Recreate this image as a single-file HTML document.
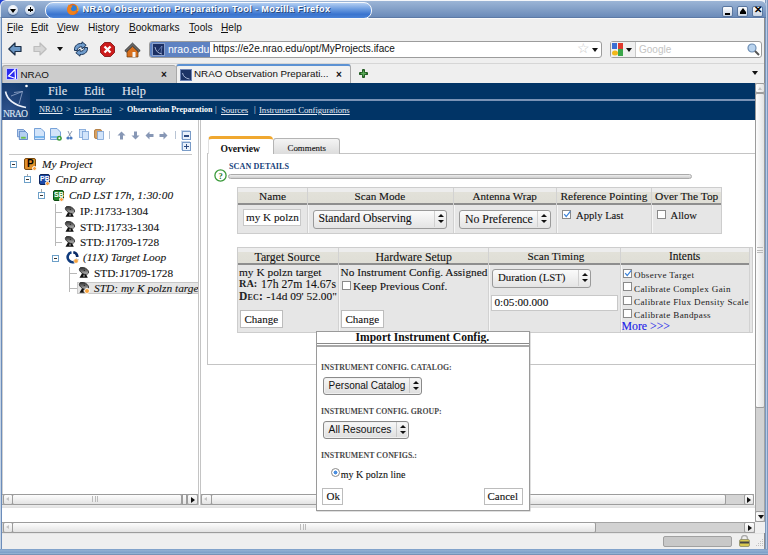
<!DOCTYPE html>
<html><head><meta charset="utf-8">
<style>
*{box-sizing:border-box;margin:0;padding:0}
html,body{width:768px;height:555px;overflow:hidden;background:#86a6cc;font-family:"Liberation Sans",sans-serif;}
.a{position:absolute}
.s{font-family:"Liberation Serif",serif;-webkit-text-stroke:0.1px currentColor}
.t{position:absolute;white-space:nowrap}
.s[style*="bold"]{-webkit-text-stroke:0}
#title{position:absolute;left:0;top:0;width:766px;height:18px;background:linear-gradient(#9cb5d6,#6b8bb9);border-radius:6px 6px 0 0;border-top:1px solid #f4f6fa;border-left:1px solid #dfe8f2;border-bottom:1px solid #5d7aa6}
#cap{position:absolute;left:44px;top:1px;width:327px;height:17px;border-radius:8px;background:linear-gradient(#b4cff2,#6d9de0 40%,#3a74cf 75%,#4a82d6);border:1px solid #f4f8fd}
.ttl{position:absolute;left:81.5px;top:2.5px;font:bold 9.2px "Liberation Sans",sans-serif;letter-spacing:0.35px;color:#fff;text-shadow:1px 1px 0 #2c4a78;white-space:nowrap}
.wbtn{position:absolute;top:3.5px;width:10px;height:10px;border-radius:50%;background:radial-gradient(circle at 50% 30%,#ffffff,#dce5f1 55%,#8ea6c8);box-shadow:0 1px 1px #3e5e8e}
.sq{position:absolute;top:5px;width:11px;height:11px;background:linear-gradient(#fff,#c8d3e2);border:1px solid #5a77a0;border-radius:2px}
#chrome{position:absolute;left:2px;top:18px;width:762px;height:531px;background:#efefef;border-top:1px solid #fafafa}
.menu{position:absolute;top:22px;font-size:10.1px;color:#111;white-space:nowrap}
</style></head><body>
<div class="a" style="left:0;top:0;width:8px;height:8px;background:#1f3fd4"></div>
<div class="a" style="left:760px;top:0;width:8px;height:8px;background:#e9eef6"></div>
<div class="a" style="left:0;top:18px;width:1px;height:537px;background:#c3d3e6"></div>
<div class="a" style="left:1px;top:18px;width:1px;height:531px;background:#6b8cba"></div>
<div class="a" style="left:764px;top:18px;width:1px;height:531px;background:#8c8c8c"></div>
<div class="a" style="left:765px;top:0;width:3px;height:555px;background:linear-gradient(90deg,#6080aa,#b8cbe6,#6080aa)"></div>
<div class="a" style="left:0;top:549px;width:768px;height:6px;background:linear-gradient(#7c9ec8,#93b1d2 30%,#7c9ec8 55%,#93b1d2 75%,#6a84a8)"></div>
<div id="title">
  <div class="wbtn" style="left:6.5px"></div>
  <div class="a" style="left:8.5px;top:7.5px;width:0;height:0;border-left:3px solid transparent;border-right:3px solid transparent;border-top:4px solid #000"></div>
  <div class="wbtn" style="left:24.3px"></div>
  <div class="a" style="left:26.8px;top:8px;width:5px;height:1.5px;background:#000"></div>
  <div class="a" style="left:28.55px;top:6.25px;width:1.5px;height:5px;background:#000"></div>
  <div id="cap"></div>
  <svg class="a" style="left:65px;top:2px" width="13" height="13" viewBox="0 0 13 13"><circle cx="6.8" cy="6.4" r="5.6" fill="#e86a14"/><circle cx="7.4" cy="5.6" r="3.3" fill="#2f7fd6"/><path d="M1.8 3.5 L3 1.2 L4.2 2.8 C5.5 2.2 6.5 2.8 6.2 4 C5 4.5 4.5 5.8 5.2 7 C6.5 8.8 9 8.6 10.6 6.5 C10.6 9.5 8.6 11.8 6 11.8 C3 11.8 1.2 9.2 1.2 6.4 Z" fill="#f0801c"/><path d="M10.5 2.5 C12 4 12.4 6 11.8 8" stroke="#f8c030" stroke-width="1" fill="none"/></svg>
  <div class="ttl">NRAO Observation Preparation Tool - Mozilla Firefox</div>
  <div class="sq" style="left:721px"></div>
  <div class="a" style="left:724px;top:12px;width:5px;height:1.5px;background:#000"></div>
  <div class="sq" style="left:736px"></div>
  <div class="a" style="left:738.5px;top:6.5px;width:0;height:0;border-left:3px solid transparent;border-right:3px solid transparent;border-bottom:4px solid #000"></div>
  <div class="a" style="left:738.5px;top:11px;width:6px;height:1.5px;background:#000"></div>
  <div class="sq" style="left:751px"></div>
  <div class="t" style="left:752.5px;top:3px;font:bold 10px 'Liberation Sans';color:#000">✕</div>
</div>
<div id="chrome"></div>
<div class="menu" style="left:7px">File</div>
<div class="menu" style="left:31px">Edit</div>
<div class="menu" style="left:57px">View</div>
<div class="menu" style="left:88px">History</div>
<div class="menu" style="left:129px">Bookmarks</div>
<div class="menu" style="left:189px">Tools</div>
<div class="menu" style="left:221px">Help</div>
<div class="a" style="left:7px;top:32px;width:6px;height:1px;background:#111"></div>
<div class="a" style="left:31px;top:32px;width:7px;height:1px;background:#111"></div>
<div class="a" style="left:57px;top:32px;width:7px;height:1px;background:#111"></div>
<div class="a" style="left:98px;top:32px;width:5px;height:1px;background:#111"></div>
<div class="a" style="left:129px;top:32px;width:7px;height:1px;background:#111"></div>
<div class="a" style="left:189px;top:32px;width:6px;height:1px;background:#111"></div>
<div class="a" style="left:221px;top:32px;width:7px;height:1px;background:#111"></div>
<!-- nav toolbar -->
<svg class="a" style="left:8px;top:42px" width="14" height="14" viewBox="0 0 14 14"><path d="M0.8 7 L7 1 L7 4.5 L13 4.5 L13 9.5 L7 9.5 L7 13 Z" fill="#6a96c4" stroke="#1b2f48" stroke-width="1.2" stroke-linejoin="round"/></svg>
<svg class="a" style="left:33px;top:42px" width="14" height="14" viewBox="0 0 14 14"><path d="M13.2 7 L7 1 L7 4.5 L1 4.5 L1 9.5 L7 9.5 L7 13 Z" fill="#d6d6d6" stroke="#bdbdbd" stroke-width="1.2" stroke-linejoin="round"/></svg>
<div class="a" style="left:57px;top:47px;width:0;height:0;border-left:3.5px solid transparent;border-right:3.5px solid transparent;border-top:4px solid #111"></div>
<svg class="a" style="left:72px;top:41px" width="18" height="16" viewBox="0 0 18 16"><path d="M2.5 9.5 C2 4.5 6 2 10 2.5 L10 0.8 L14.2 4.3 L10 7.8 L10 5.8 C7.5 5.5 5.3 7 5.6 9.5 Z" fill="#6f9ccc" stroke="#1b3558" stroke-width="1" stroke-linejoin="round"/><path d="M15.5 6.5 C16 11.5 12 14 8 13.5 L8 15.2 L3.8 11.7 L8 8.2 L8 10.2 C10.5 10.5 12.7 9 12.4 6.5 Z" fill="#6f9ccc" stroke="#1b3558" stroke-width="1" stroke-linejoin="round"/></svg>
<svg class="a" style="left:100px;top:42px" width="15" height="15" viewBox="0 0 15 15"><path d="M4.5 0.5 L10.5 0.5 L14.5 4.5 L14.5 10.5 L10.5 14.5 L4.5 14.5 L0.5 10.5 L0.5 4.5 Z" fill="#cc1b1b" stroke="#7a0a0a" stroke-width="0.8"/><path d="M4.5 4.5 L10.5 10.5 M10.5 4.5 L4.5 10.5" stroke="#fff" stroke-width="2.3"/></svg>
<svg class="a" style="left:124px;top:42px" width="17" height="16" viewBox="0 0 17 16"><path d="M3 8 L8.5 3.5 L14 8 L14 15 L3 15 Z" fill="#d8701e" stroke="#6a3a10" stroke-width="0.7"/><path d="M0.8 8.6 L8.5 1 L16.2 8.6 L14.6 10 L8.5 4.2 L2.4 10 Z" fill="#6a6a6a" stroke="#2a2a2a" stroke-width="0.8" stroke-linejoin="round"/><rect x="8.5" y="10" width="3" height="5" fill="#f4f4f4"/></svg>
<!-- URL bar -->
<div class="a" style="left:149px;top:41px;width:453px;height:17px;background:#fff;border:1px solid #9c9c9c;border-radius:3px"></div>
<div class="a" style="left:150px;top:42px;width:60px;height:15px;background:#5e82c2;border-radius:2px 0 0 2px"></div>
<div class="a" style="left:152px;top:43px;width:13px;height:13px;background:#1b2f63;border:1px solid #8aa0cc"></div>
<svg class="a" style="left:153px;top:44px" width="11" height="11" viewBox="0 0 11 11"><path d="M2 3 Q3 9 9 10" stroke="#c8d4f0" stroke-width="0.8" fill="none"/><path d="M5 7 L9 2 L8 9" stroke="#8ea4d8" stroke-width="0.6" fill="none"/></svg>
<div class="t" style="left:168px;top:43px;font-size:10.5px;color:#fff">nrao.edu</div>
<div class="t" style="left:213px;top:43px;font-size:10px;color:#111">https://e2e.nrao.edu/opt/MyProjects.iface</div>
<div class="t" style="left:577px;top:40px;font-size:14px;color:#c8c8c8">☆</div>
<div class="a" style="left:592px;top:48px;width:0;height:0;border-left:3.5px solid transparent;border-right:3.5px solid transparent;border-top:4px solid #111"></div>
<!-- search bar -->
<div class="a" style="left:610px;top:41px;width:152px;height:17px;background:#fff;border:1px solid #9c9c9c;border-radius:3px"></div>
<div class="a" style="left:611px;top:42px;width:25px;height:15px;background:#f0f0f0;border-right:1px solid #c8c8c8"></div>
<svg class="a" style="left:612px;top:43px" width="12" height="13" viewBox="0 0 12 13"><rect x="0" y="0" width="5" height="6" fill="#3b6fd4"/><rect x="6" y="0" width="5" height="6" fill="#e03a2e"/><rect x="6" y="6" width="5" height="7" fill="#3aa64a"/><ellipse cx="3" cy="10" rx="3" ry="2.5" fill="#f2b818"/></svg>
<div class="a" style="left:626px;top:48px;width:0;height:0;border-left:3.5px solid transparent;border-right:3.5px solid transparent;border-top:4px solid #111"></div>
<div class="t" style="left:639px;top:44px;font-size:10px;color:#c4c4c4">Google</div>
<svg class="a" style="left:747px;top:43px" width="13" height="13" viewBox="0 0 13 13"><circle cx="5" cy="5" r="4" fill="#b9d3ee" stroke="#6e8fb5" stroke-width="1.2"/><path d="M8 8 L12 12" stroke="#555" stroke-width="2"/></svg>
<!-- tab bar -->
<div class="a" style="left:2px;top:63px;width:762px;height:1px;background:#d6d6d6"></div>
<div class="a" style="left:2px;top:65px;width:174px;height:18px;background:#cccccc;border-top:1px solid #a8a8a8;border-left:1px solid #a8a8a8;border-radius:3px 3px 0 0"></div>
<div class="a" style="left:6px;top:68px;width:12px;height:12px;background:#2a2af0;border:1px solid #c8c8ff"></div>
<svg class="a" style="left:6px;top:68px" width="12" height="12" viewBox="0 0 12 12"><path d="M9 1.5 L2.5 8 L9.5 10.5 Z M9 1.5 L9.5 10.5" stroke="#fff" stroke-width="1.2" fill="none"/></svg>
<div class="t" style="left:20.5px;top:68.5px;font-size:9.8px;color:#111">NRAO</div>
<div class="t" style="left:161px;top:69px;font:bold 10px 'Liberation Sans';color:#111">×</div>
<div class="a" style="left:176px;top:64px;width:175px;height:19px;background:#f1f1f1;border-top:2px solid #5d92d3;border-left:1px solid #a8a8a8;border-right:1px solid #a8a8a8;border-radius:3px 3px 0 0"></div>
<div class="a" style="left:180px;top:69px;width:12px;height:12px;background:#1c3366;border:1px solid #6c83b5"></div>
<svg class="a" style="left:181px;top:70px" width="10" height="10" viewBox="0 0 10 10"><path d="M1.5 3 Q2.5 8 8.5 9" stroke="#c8d4f0" stroke-width="0.8" fill="none"/></svg>
<div class="t" style="left:194px;top:68px;font-size:9.8px;color:#111">NRAO Observation Preparati...</div>
<div class="t" style="left:336px;top:69px;font:bold 10px 'Liberation Sans';color:#111">×</div>
<svg class="a" style="left:358.5px;top:68.5px" width="9" height="9" viewBox="0 0 9 9"><path d="M4.5 1.3 V7.7 M1.3 4.5 H7.7" stroke="#1f5a1f" stroke-width="3" stroke-linecap="round"/><path d="M4.5 2.3 V6.7 M2.3 4.5 H6.7" stroke="#5aa858" stroke-width="1.4" stroke-linecap="round"/></svg>
<div class="a" style="left:752px;top:71px;width:0;height:0;border-left:3.5px solid transparent;border-right:3.5px solid transparent;border-top:4px solid #111"></div>
<!-- page viewport -->
<div class="a" style="left:2px;top:83px;width:753px;height:439px;background:#fff"></div>
<!-- header -->
<div class="a" style="left:2px;top:83px;width:753px;height:37px;background:#013466"></div>
<div class="a" style="left:2px;top:83px;width:28px;height:37px;background:radial-gradient(ellipse at 20% 80%,#30548e 0,#1e4278 45%,#0a3566 100%)"></div>
<svg class="a" style="left:2px;top:83px" width="28" height="37" viewBox="0 0 28 37"><circle cx="24.5" cy="3" r="1.3" fill="#fff"/><path d="M3.5 8.5 Q6 21 24 24.5" stroke="#eef2fa" stroke-width="1.6" fill="none"/><path d="M9 13 L20.5 8.5 L17 21 M12 9.5 L20.5 8.5" stroke="#a8b8d8" stroke-width="0.7" fill="none"/></svg>
<div class="t s" style="left:2.5px;top:108px;font-size:10.5px;color:#dfe6f2;letter-spacing:-0.9px;transform:scaleX(0.92);transform-origin:left">NRAO</div>
<div class="t s" style="left:48px;top:84px;font-size:12.3px;color:#e1e7f0">File</div>
<div class="t s" style="left:84px;top:84px;font-size:12.3px;color:#e1e7f0">Edit</div>
<div class="t s" style="left:122px;top:84px;font-size:12.3px;color:#e1e7f0">Help</div>
<div class="a" style="left:36px;top:99px;width:719px;height:2px;background:#7a93b6"></div>
<div class="t s" style="left:39px;top:105px;font-size:8.3px;color:#e6ebf3;-webkit-text-stroke:0"><u>NRAO</u></div>
<div class="t s" style="left:66px;top:105px;font-size:8.3px;color:#e6ebf3;-webkit-text-stroke:0">&gt;</div>
<div class="t s" style="left:74px;top:105px;font-size:8.8px;color:#e6ebf3;-webkit-text-stroke:0;letter-spacing:-0.2px"><u>User Portal</u></div>
<div class="t s" style="left:119px;top:105px;font-size:8.3px;color:#e6ebf3;-webkit-text-stroke:0">&gt;</div>
<div class="t s" style="left:127px;top:105px;font-size:8px;color:#fff;font-weight:bold;-webkit-text-stroke:0">Observation Preparation</div>
<div class="t s" style="left:215px;top:105px;font-size:8.3px;color:#e6ebf3;-webkit-text-stroke:0">|</div>
<div class="t s" style="left:221px;top:105px;font-size:8.8px;color:#e6ebf3;-webkit-text-stroke:0;letter-spacing:-0.1px"><u>Sources</u></div>
<div class="t s" style="left:254px;top:105px;font-size:8.3px;color:#e6ebf3;-webkit-text-stroke:0">|</div>
<div class="t s" style="left:259px;top:105px;font-size:8.7px;color:#e6ebf3;-webkit-text-stroke:0;letter-spacing:-0.05px"><u>Instrument Configurations</u></div>
<!-- left panel -->
<div class="a" style="left:2px;top:120px;width:1px;height:374px;background:#d0d0d0"></div>
<!-- left panel toolbar -->
<svg class="a" style="left:17px;top:128.5px" width="11" height="11" viewBox="0 0 12 12"><path d="M0.5 0.5 H7 L9 2.5 V8.5 H0.5 Z" fill="#c9dcf6" stroke="#5b86c6" stroke-width="0.9"/><path d="M2.5 2.5 H9 L11.5 5 V11.5 H2.5 Z" fill="#b5d0f2" stroke="#4a78bc" stroke-width="0.9"/><rect x="4.5" y="8.5" width="5" height="2" fill="#6cc04a"/></svg>
<svg class="a" style="left:33.5px;top:128px" width="11" height="12" viewBox="0 0 11 12"><path d="M0.5 0.5 H7 L10.5 4 V11.5 H0.5 Z" fill="#d2e4fa" stroke="#6a98d4" stroke-width="0.9"/><rect x="1" y="8" width="9" height="2" fill="#7ab8ee"/></svg>
<svg class="a" style="left:50px;top:128px" width="12" height="13" viewBox="0 0 12 13"><path d="M0.5 0.5 H7 L10.5 4 V11.5 H0.5 Z" fill="#d2e4fa" stroke="#6a98d4" stroke-width="0.9"/><rect x="1" y="8" width="9" height="2" fill="#7ab8ee"/><circle cx="9.3" cy="10.3" r="2.5" fill="#3c9c3c"/><circle cx="9.3" cy="10.3" r="1" fill="#fff"/></svg>
<svg class="a" style="left:66px;top:130.5px" width="7" height="9" viewBox="0 0 7 9"><path d="M2 0 L4.5 5.5 M6 0 L2.5 5.5" stroke="#8090a8" stroke-width="0.9"/><circle cx="2" cy="7" r="1.6" fill="#4a7ac0"/><circle cx="5" cy="7" r="1.6" fill="#4a7ac0"/></svg>
<svg class="a" style="left:79px;top:129px" width="10" height="11" viewBox="0 0 10 11"><rect x="0.5" y="0.5" width="6" height="8" fill="#d2e4fa" stroke="#7aa2d6" stroke-width="0.8"/><rect x="3.5" y="2.5" width="6" height="8" fill="#d2e4fa" stroke="#7aa2d6" stroke-width="0.8"/></svg>
<svg class="a" style="left:93.5px;top:129px" width="10" height="11" viewBox="0 0 10 11"><rect x="0.5" y="0.5" width="7" height="9" rx="1.5" fill="#d8a060" stroke="#a87030" stroke-width="0.8"/><rect x="3.5" y="2.5" width="6" height="8" fill="#d2e4fa" stroke="#7aa2d6" stroke-width="0.8"/></svg>
<div class="a" style="left:109px;top:131px;width:1px;height:8px;background:#b8c4d4"></div>
<svg class="a" style="left:117px;top:131px" width="9" height="9" viewBox="0 0 9 9"><path d="M4.5 0.5 L8.5 4.5 H6 V8.5 H3 V4.5 H0.5 Z" fill="#8797b5"/></svg>
<svg class="a" style="left:131px;top:131px" width="9" height="9" viewBox="0 0 9 9"><path d="M4.5 8.5 L8.5 4.5 H6 V0.5 H3 V4.5 H0.5 Z" fill="#8797b5"/></svg>
<svg class="a" style="left:145px;top:131px" width="9" height="9" viewBox="0 0 9 9"><path d="M0.5 4.5 L4.5 0.5 V3 H8.5 V6 H4.5 V8.5 Z" fill="#8797b5"/></svg>
<svg class="a" style="left:159px;top:131px" width="9" height="9" viewBox="0 0 9 9"><path d="M8.5 4.5 L4.5 0.5 V3 H0.5 V6 H4.5 V8.5 Z" fill="#8797b5"/></svg>
<div class="a" style="left:175px;top:131px;width:1px;height:8px;background:#b8c4d4"></div>
<div class="a" style="left:182px;top:131px;width:9px;height:9px;background:#e8f0fa;border:1px solid #7a9cc8;box-shadow:-1px -1px 0 #c8d8ee"></div>
<div class="a" style="left:184px;top:135px;width:5px;height:1.5px;background:#2c4a80"></div>
<div class="a" style="left:182px;top:142px;width:9px;height:9px;background:#e8f0fa;border:1px solid #7a9cc8;box-shadow:-1px -1px 0 #c8d8ee"></div>
<div class="a" style="left:184px;top:146px;width:5px;height:1px;background:#2c4a80"></div>
<div class="a" style="left:186px;top:144px;width:1px;height:5px;background:#2c4a80"></div>
<div class="a" style="left:9px;top:154px;width:183px;height:1px;background:#c8c8c8"></div>
<!-- tree -->
<div class="a" style="left:10px;top:161px;width:7px;height:7px;background:#fff;border:1px solid #6da0c8"></div><div class="a" style="left:12px;top:164px;width:3px;height:1px;background:#333"></div>
<div class="a" style="left:24px;top:158px;width:12px;height:12px;background:#e0902a;border:1px solid #7a4a10;border-radius:2px"></div>
<div class="t" style="left:27px;top:158px;font:bold 10px 'Liberation Sans';color:#000">P</div>
<div class="a" style="left:32px;top:166px;width:5px;height:5px;background:#f8a040;border:1px solid #fff;border-radius:50%"></div>
<div class="t s" style="left:42px;top:158px;font-size:11.4px;font-style:italic;color:#111">My Project</div>

<div class="a" style="left:27px;top:174px;width:1px;height:2px;background:#aaa"></div>
<div class="a" style="left:24px;top:176px;width:7px;height:7px;background:#fff;border:1px solid #6da0c8"></div><div class="a" style="left:26px;top:179px;width:3px;height:1px;background:#333"></div>
<div class="a" style="left:39px;top:174px;width:11px;height:11px;background:#1d4aa8;border:1px solid #0c2458;border-radius:2px"></div>
<div class="t" style="left:40px;top:175px;font:bold 7px 'Liberation Sans';color:#fff">PB</div>
<div class="a" style="left:45px;top:181px;width:5px;height:5px;background:#f8a040;border:1px solid #fff;border-radius:50%"></div>
<div class="t s" style="left:55.5px;top:173px;font-size:11.4px;font-style:italic;color:#111">CnD array</div>

<div class="a" style="left:41px;top:189px;width:1px;height:3px;background:#aaa"></div>
<div class="a" style="left:38px;top:192px;width:7px;height:7px;background:#fff;border:1px solid #6da0c8"></div><div class="a" style="left:40px;top:195px;width:3px;height:1px;background:#333"></div>
<div class="a" style="left:53px;top:190px;width:11px;height:11px;background:#21862a;border:1px solid #0c4a10;border-radius:2px"></div>
<div class="t" style="left:54px;top:191px;font:bold 7px 'Liberation Sans';color:#fff">SB</div>
<div class="a" style="left:59px;top:197px;width:5px;height:5px;background:#f8a040;border:1px solid #fff;border-radius:50%"></div>
<div class="t s" style="left:69px;top:188.5px;font-size:11.4px;font-style:italic;color:#111">CnD LST 17h, 1:30:00</div>

<div class="a" style="left:55px;top:204px;width:1px;height:42px;background:#b8b8b8"></div>
<div class="a" style="left:56px;top:212px;width:6px;height:1px;background:#b8b8b8"></div>
<div class="a" style="left:56px;top:227px;width:6px;height:1px;background:#b8b8b8"></div>
<div class="a" style="left:56px;top:242px;width:6px;height:1px;background:#b8b8b8"></div>
<svg width="0" height="0" style="position:absolute"><defs>
<linearGradient id="dg" x1="0" y1="0" x2="1" y2="1"><stop offset="0" stop-color="#111"/><stop offset="0.55" stop-color="#777"/><stop offset="1" stop-color="#eee"/></linearGradient>
<symbol id="ant" viewBox="0 0 12 12"><path d="M1.5 10.8 L4.2 6 L6 6.5 L7.5 6 L9.8 10.8 Z" fill="#111"/><path d="M5.3 9.5 L6 7.2 L6.7 9.5 Z" fill="#fff"/><ellipse cx="6" cy="3.8" rx="5" ry="3" transform="rotate(28 6 3.8)" fill="url(#dg)" stroke="#222" stroke-width="0.7"/><circle cx="6.3" cy="3.4" r="0.6" fill="#222"/></symbol>
</defs></svg>
<svg class="a" style="left:64px;top:206px" width="12" height="12"><use href="#ant"/></svg>
<div class="t s" style="left:80px;top:205px;font-size:11.3px;color:#111;word-spacing:-1.2px">IP: J1733-1304</div>
<svg class="a" style="left:64px;top:221px" width="12" height="12"><use href="#ant"/></svg>
<div class="t s" style="left:80px;top:220.5px;font-size:11.3px;color:#111;word-spacing:-1.5px">STD: J1733-1304</div>
<svg class="a" style="left:64px;top:236px" width="12" height="12"><use href="#ant"/></svg>
<div class="t s" style="left:80px;top:235.5px;font-size:11.3px;color:#111;word-spacing:-1.5px">STD: J1709-1728</div>

<div class="a" style="left:52px;top:255px;width:7px;height:7px;background:#fff;border:1px solid #6da0c8"></div><div class="a" style="left:54px;top:258px;width:3px;height:1px;background:#333"></div>
<svg class="a" style="left:66px;top:251px" width="13" height="13" viewBox="0 0 13 13"><path d="M5.5 1.3 A5 5 0 1 0 11.3 8" stroke="#0f3a7c" stroke-width="2.6" fill="none"/><path d="M7.3 1.2 A5 5 0 0 1 11.3 6" stroke="#0a2a66" stroke-width="2.6" fill="none"/><circle cx="10" cy="10" r="2.3" fill="#f6a23c" stroke="#fff" stroke-width="0.6"/></svg>
<div class="t s" style="left:83px;top:251px;font-size:11.4px;font-style:italic;color:#111">(11X) Target Loop</div>

<div class="a" style="left:69px;top:267px;width:1px;height:25px;background:#b8b8b8"></div>
<div class="a" style="left:70px;top:273px;width:7px;height:1px;background:#b8b8b8"></div>
<div class="a" style="left:70px;top:288px;width:7px;height:1px;background:#b8b8b8"></div>
<svg class="a" style="left:78px;top:267px" width="12" height="12"><use href="#ant"/></svg>
<div class="t s" style="left:94px;top:266.5px;font-size:11.3px;color:#111;word-spacing:-1.5px">STD: J1709-1728</div>
<div class="a" style="left:77px;top:282px;width:121px;height:12px;background:#e6e6e6;border-top:1px solid #c8c8c8;border-bottom:1px solid #c8c8c8;border-left:1px solid #c8c8c8"></div>
<svg class="a" style="left:78px;top:282px" width="12" height="12"><use href="#ant"/></svg>
<div class="a" style="left:84px;top:288px;width:6px;height:6px;background:#f6a23c;border:1px solid #fff;border-radius:50%"></div>
<div style="position:absolute;left:77px;top:281px;width:121px;height:14px;overflow:hidden"><div class="t s" style="left:17px;top:0.5px;font-size:11.4px;font-style:italic;color:#111">STD: my K polzn target</div></div>
<!-- splitter -->
<div class="a" style="left:198px;top:120px;width:1px;height:388px;background:#c4c4c4"></div>
<div class="a" style="left:200px;top:120px;width:1px;height:388px;background:#c4c4c4"></div>
<!-- right panel tabs -->
<div class="a" style="left:207px;top:153px;width:548px;height:212px;border-left:1px solid #c4c4c4;border-bottom:1px solid #c4c4c4"></div>
<div class="a" style="left:339px;top:153px;width:416px;height:1px;background:#c4c4c4"></div>
<div class="a" style="left:208px;top:136px;width:65px;height:18px;background:#fff;border-top:3px solid #f0a830;border-radius:4px 4px 0 0;border-left:1px solid #e0e0e0"></div>
<div class="t s" style="left:220.5px;top:142.5px;font-size:9.6px;font-weight:bold;color:#111">Overview</div>
<div class="a" style="left:273px;top:138px;width:67px;height:16px;background:linear-gradient(#f4f4f4,#dcdcdc);border:1px solid #b4b4b4;border-bottom:none;border-radius:3px 3px 0 0"></div>
<div class="t s" style="left:287.5px;top:142.5px;font-size:8.9px;color:#111">Comments</div>
<div class="t s" style="left:229px;top:161.5px;font-size:8.1px;font-weight:bold;color:#15417a;font-variant:small-caps;letter-spacing:0.1px">SCAN DETAILS</div>
<svg class="a" style="left:214px;top:169px" width="13" height="13" viewBox="0 0 13 13"><circle cx="6.5" cy="6.5" r="5.6" fill="#fff" stroke="#3a9a3a" stroke-width="1.3"/><text x="6.5" y="9.6" text-anchor="middle" font-family="Liberation Serif" font-weight="bold" font-size="8.5" fill="#2a7a2a">?</text></svg>
<div class="a" style="left:228px;top:174px;width:464px;height:5px;background:linear-gradient(#eee,#ccc);border:1px solid #aaa;border-radius:3px"></div>
<!-- table 1 -->
<div class="a" style="left:237px;top:187px;width:485px;height:47px;background:#e6e6e6;border:1px solid #cdcdcd"></div>
<div class="a" style="left:238px;top:188px;width:483px;height:17px;background:linear-gradient(#ededed 0,#ededed 28%,#e2e1d9 30%,#dfded6 100%);border-bottom:2px solid #8e8e8e"></div>
<div class="a" style="left:307px;top:188px;width:1px;height:45px;background:#d2d2d2"></div><div class="a" style="left:308px;top:205px;width:1px;height:28px;background:#f6f6f6"></div>
<div class="a" style="left:453px;top:188px;width:1px;height:45px;background:#d2d2d2"></div><div class="a" style="left:454px;top:205px;width:1px;height:28px;background:#f6f6f6"></div>
<div class="a" style="left:556px;top:188px;width:1px;height:45px;background:#d2d2d2"></div><div class="a" style="left:557px;top:205px;width:1px;height:28px;background:#f6f6f6"></div>
<div class="a" style="left:651px;top:188px;width:1px;height:45px;background:#d2d2d2"></div><div class="a" style="left:652px;top:205px;width:1px;height:28px;background:#f6f6f6"></div>
<div class="t s" style="left:259px;top:190px;font-size:11.3px;color:#111">Name</div>
<div class="t s" style="left:354.5px;top:190px;font-size:11.2px;color:#111">Scan Mode</div>
<div class="t s" style="left:472.5px;top:190px;font-size:11.1px;color:#111">Antenna Wrap</div>
<div class="t s" style="left:560.5px;top:190px;font-size:11.3px;color:#111">Reference Pointing</div>
<div class="t s" style="left:655px;top:190px;font-size:11.4px;color:#111">Over The Top</div>
<div class="a" style="left:243px;top:209px;width:58px;height:17px;background:#fff;border:1px solid #c8c8c8"></div>
<div class="t s" style="left:246px;top:211px;font-size:11.2px;color:#111">my K polzn</div>
<div class="a" style="left:313px;top:209.5px;width:134px;height:19px;background:linear-gradient(#fbfbfb,#e4e4e4);border:1px solid #9a9a9a;border-radius:3px"></div>
<div class="a" style="left:434px;top:211px;width:1px;height:16px;background:#d0d0d0"></div>
<div class="t s" style="left:318.5px;top:212px;font-size:11.7px;color:#111">Standard Observing</div>
<div class="a" style="left:437.5px;top:214px;border-left:3px solid transparent;border-right:3px solid transparent;border-bottom:3.5px solid #111"></div>
<div class="a" style="left:437.5px;top:220px;border-left:3px solid transparent;border-right:3px solid transparent;border-top:3.5px solid #111"></div>
<div class="a" style="left:459px;top:209.5px;width:92px;height:19px;background:linear-gradient(#fbfbfb,#e4e4e4);border:1px solid #9a9a9a;border-radius:3px"></div>
<div class="a" style="left:537px;top:211px;width:1px;height:16px;background:#d0d0d0"></div>
<div class="t s" style="left:465px;top:212px;font-size:11.8px;color:#111">No Preference</div>
<div class="a" style="left:541px;top:214px;border-left:3px solid transparent;border-right:3px solid transparent;border-bottom:3.5px solid #111"></div>
<div class="a" style="left:541px;top:220px;border-left:3px solid transparent;border-right:3px solid transparent;border-top:3.5px solid #111"></div>
<div class="a" style="left:562px;top:210px;width:9px;height:9px;background:#fff;border:1px solid #8a8a8a"></div>
<svg class="a" style="left:562px;top:209px" width="10" height="10" viewBox="0 0 10 10"><path d="M2.2 5.2 L4.2 7.5 L8.3 2.3" stroke="#3b82d8" stroke-width="1.2" fill="none"/></svg>
<div class="t s" style="left:576px;top:209.5px;font-size:10.6px;color:#111">Apply Last</div>
<div class="a" style="left:657px;top:210px;width:9px;height:9px;background:#fff;border:1px solid #8a8a8a"></div>
<div class="t s" style="left:670.5px;top:209.5px;font-size:10.6px;color:#111">Allow</div>
<!-- table 2 -->
<div class="a" style="left:237px;top:247px;width:516px;height:86px;background:#e6e6e6;border:1px solid #cdcdcd"></div>
<div class="a" style="left:238px;top:248px;width:511px;height:17px;background:linear-gradient(#ededed 0,#ededed 28%,#e2e1d9 30%,#dfded6 100%);border-bottom:2px solid #8e8e8e"></div>
<div class="a" style="left:338px;top:248px;width:1px;height:84px;background:#d2d2d2"></div><div class="a" style="left:339px;top:265px;width:1px;height:67px;background:#f6f6f6"></div>
<div class="a" style="left:488px;top:248px;width:1px;height:84px;background:#d2d2d2"></div><div class="a" style="left:489px;top:265px;width:1px;height:67px;background:#f6f6f6"></div>
<div class="a" style="left:620px;top:248px;width:1px;height:84px;background:#d2d2d2"></div><div class="a" style="left:621px;top:265px;width:1px;height:67px;background:#f6f6f6"></div>
<div class="a" style="left:749px;top:248px;width:1px;height:84px;background:#d2d2d2"></div>
<div class="t s" style="left:254.5px;top:249.5px;font-size:11.8px;color:#111">Target Source</div>
<div class="t s" style="left:375.5px;top:249.5px;font-size:11.8px;color:#111">Hardware Setup</div>
<div class="t s" style="left:527.5px;top:250px;font-size:11.2px;color:#111">Scan Timing</div>
<div class="t s" style="left:669px;top:250px;font-size:11.5px;color:#111">Intents</div>
<div class="t s" style="left:239px;top:265.5px;font-size:11.4px;color:#111">my K polzn target</div>
<div class="t s" style="left:239px;top:277.5px;font-size:10.3px;color:#222;font-weight:bold">RA:</div><div class="t s" style="left:261px;top:277.5px;font-size:11.7px;color:#111">17h 27m 14.67s</div>
<div class="t s" style="left:239px;top:289.5px;font-size:11.5px;color:#222;font-weight:bold;font-variant:small-caps;letter-spacing:0.2px">Dec:</div><div class="t s" style="left:266.5px;top:289.5px;font-size:11.4px;color:#111">-14d 09' 52.00"</div>
<div class="a" style="left:240px;top:310px;width:43px;height:18px;background:#fff;border:1px solid #bcbcbc"></div>
<div class="t s" style="left:244.5px;top:312.5px;font-size:11px;color:#111">Change</div>
<div class="t s" style="left:340.5px;top:265.5px;font-size:11.3px;color:#111">No Instrument Config. Assigned</div>
<div class="a" style="left:342px;top:281px;width:9px;height:9px;background:#fff;border:1px solid #8a8a8a"></div>
<div class="t s" style="left:353px;top:279.5px;font-size:11.3px;color:#111">Keep Previous Conf.</div>
<div class="a" style="left:341px;top:310px;width:43px;height:18px;background:#fff;border:1px solid #bcbcbc"></div>
<div class="t s" style="left:345.5px;top:312.5px;font-size:11px;color:#111">Change</div>
<div class="a" style="left:492px;top:268.5px;width:99px;height:19.5px;background:linear-gradient(#fbfbfb,#e4e4e4);border:1px solid #9a9a9a;border-radius:3px"></div>
<div class="a" style="left:578px;top:270px;width:1px;height:16px;background:#d0d0d0"></div>
<div class="t s" style="left:498px;top:271px;font-size:10.8px;color:#111">Duration (LST)</div>
<div class="a" style="left:581.5px;top:273px;border-left:3px solid transparent;border-right:3px solid transparent;border-bottom:3.5px solid #111"></div>
<div class="a" style="left:581.5px;top:279px;border-left:3px solid transparent;border-right:3px solid transparent;border-top:3.5px solid #111"></div>
<div class="a" style="left:491px;top:294.5px;width:127px;height:16px;background:#fff;border:1px solid #c8c8c8"></div>
<div class="t s" style="left:494.5px;top:296px;font-size:11.2px;color:#111">0:05:00.000</div>
<div class="a" style="left:623px;top:269px;width:9px;height:9px;background:#fff;border:1px solid #8a8a8a"></div>
<svg class="a" style="left:623px;top:268px" width="10" height="10" viewBox="0 0 10 10"><path d="M2.2 5.2 L4.2 7.5 L8.3 2.3" stroke="#3b82d8" stroke-width="1.2" fill="none"/></svg>
<div class="t s" style="left:634px;top:270px;font-size:9.1px;color:#1a1a1a;letter-spacing:0.36px;-webkit-text-stroke:0">Observe Target</div>
<div class="a" style="left:623px;top:282px;width:9px;height:9px;background:#fff;border:1px solid #8a8a8a"></div>
<div class="t s" style="left:634px;top:283.5px;font-size:9.1px;color:#1a1a1a;letter-spacing:0.36px;-webkit-text-stroke:0">Calibrate Complex Gain</div>
<div class="a" style="left:623px;top:295.5px;width:9px;height:9px;background:#fff;border:1px solid #8a8a8a"></div>
<div class="t s" style="left:634px;top:297px;font-size:9.1px;color:#1a1a1a;letter-spacing:0.36px;-webkit-text-stroke:0">Calibrate Flux Density Scale</div>
<div class="a" style="left:623px;top:309px;width:9px;height:9px;background:#fff;border:1px solid #8a8a8a"></div>
<div class="t s" style="left:634px;top:310px;font-size:9.1px;color:#1a1a1a;letter-spacing:0.36px;-webkit-text-stroke:0">Calibrate Bandpass</div>
<div class="t s" style="left:621.5px;top:318.5px;font-size:11.8px;color:#2020e8">More &gt;&gt;&gt;</div>
<!-- scrollbars -->
<style>
.sb{position:absolute;background:linear-gradient(#fdfdfd,#e3e3e3);border:1px solid #9c9c9c;border-radius:2px}
.trk{position:absolute;background:#d4d4d4}
.vsb{position:absolute;background:linear-gradient(90deg,#fdfdfd,#e3e3e3);border:1px solid #9c9c9c;border-radius:2px}
</style>
<!-- left panel hscroll -->
<div class="a" style="left:2px;top:494px;width:196px;height:11px;background:#d4d4d4;border-top:1px solid #a4a4a4;border-bottom:1px solid #a4a4a4"></div>
<div class="sb" style="left:2.5px;top:494px;width:10px;height:11px"></div>
<div class="a" style="left:6px;top:497px;border-top:2.5px solid transparent;border-bottom:2.5px solid transparent;border-right:3px solid #c4c4c4"></div>
<div class="sb" style="left:12px;top:494px;width:170px;height:11px"></div>
<div class="t" style="left:92px;top:496px;width:6px;height:6px;border-left:1px solid #bbb;border-right:1px solid #bbb"></div><div class="a" style="left:95px;top:496px;width:1px;height:6px;background:#bbb"></div>
<div class="sb" style="left:182px;top:494px;width:5px;height:11px;border-radius:0"></div>
<div class="sb" style="left:187px;top:494px;width:11px;height:11px"></div>
<div class="a" style="left:191px;top:497px;border-top:3px solid transparent;border-bottom:3px solid transparent;border-left:4px solid #111"></div>
<!-- right panel hscroll -->
<div class="a" style="left:201px;top:494px;width:553px;height:11px;background:#d4d4d4;border-top:1px solid #a4a4a4;border-bottom:1px solid #a4a4a4"></div>
<div class="sb" style="left:201px;top:494px;width:10.5px;height:11px"></div>
<div class="a" style="left:204px;top:497px;border-top:2.5px solid transparent;border-bottom:2.5px solid transparent;border-right:3px solid #c4c4c4"></div>
<div class="sb" style="left:211px;top:494px;width:515px;height:11px"></div>
<div class="sb" style="left:743.5px;top:494px;width:10px;height:11px"></div>
<div class="a" style="left:747px;top:497px;border-top:3px solid transparent;border-bottom:3px solid transparent;border-left:4px solid #111"></div>
<div class="a" style="left:2px;top:505px;width:753px;height:3px;background:linear-gradient(#ececec,#e0e0e0)"></div>
<!-- page vscroll -->
<div class="a" style="left:755px;top:83px;width:9.5px;height:439px;background:#d2d2d2;border-left:1px solid #a4a4a4;border-right:1px solid #a4a4a4"></div>
<div class="vsb" style="left:755px;top:83px;width:9.5px;height:10px"></div>
<div class="a" style="left:757.5px;top:86.5px;border-left:2.5px solid transparent;border-right:2.5px solid transparent;border-bottom:3px solid #c4c4c4"></div>
<div class="vsb" style="left:755px;top:93px;width:9.5px;height:315px"></div>
<div class="a" style="left:757px;top:247px;width:6px;height:1px;background:#bbb"></div><div class="a" style="left:757px;top:249.5px;width:6px;height:1px;background:#bbb"></div><div class="a" style="left:757px;top:252px;width:6px;height:1px;background:#bbb"></div>
<div class="vsb" style="left:755px;top:511px;width:9.5px;height:10.5px"></div>
<div class="a" style="left:757.5px;top:515px;border-left:3px solid transparent;border-right:3px solid transparent;border-top:4px solid #111"></div>
<!-- page hscroll -->
<div class="a" style="left:2px;top:522px;width:753px;height:11px;background:#d2d2d2;border-top:1px solid #a4a4a4;border-bottom:1px solid #a4a4a4"></div>
<div class="sb" style="left:2.5px;top:522px;width:10px;height:11px"></div>
<div class="a" style="left:6px;top:525px;border-top:2.5px solid transparent;border-bottom:2.5px solid transparent;border-right:3px solid #c4c4c4"></div>
<div class="sb" style="left:12px;top:522px;width:584px;height:11px"></div>
<div class="a" style="left:300px;top:524px;width:1px;height:6px;background:#bbb"></div><div class="a" style="left:302.5px;top:524px;width:1px;height:6px;background:#bbb"></div><div class="a" style="left:305px;top:524px;width:1px;height:6px;background:#bbb"></div>
<div class="sb" style="left:744px;top:522px;width:10.5px;height:11px"></div>
<div class="a" style="left:748px;top:525px;border-top:3px solid transparent;border-bottom:3px solid transparent;border-left:4px solid #111"></div>
<div class="a" style="left:755px;top:522px;width:9.5px;height:11px;background:#efefef"></div>
<!-- status bar -->
<div class="a" style="left:2px;top:533px;width:762px;height:16px;background:#efefef;border-top:1px solid #e4e4e4"></div>
<div class="a" style="left:663px;top:536px;width:69px;height:11px;background:#c8c8c8;border:1px solid #a0a0a0;border-radius:2px"></div>
<svg class="a" style="left:739px;top:535px" width="11" height="12" viewBox="0 0 11 12"><path d="M2.5 5 V3.5 A3 3 0 0 1 8.5 3.5 V5" stroke="#aaa" stroke-width="1.4" fill="none"/><rect x="0.5" y="4.5" width="10" height="7" rx="1.5" fill="#d8c850" stroke="#8a8a6a" stroke-width="0.8"/><rect x="1" y="6.5" width="9" height="2" fill="#444"/></svg>
<svg class="a" style="left:755px;top:538px" width="9" height="10" viewBox="0 0 9 10"><g fill="#c0c0c0"><rect x="7" y="1" width="1" height="1"/><rect x="5" y="3" width="1" height="1"/><rect x="7" y="3" width="1" height="1"/><rect x="3" y="5" width="1" height="1"/><rect x="5" y="5" width="1" height="1"/><rect x="7" y="5" width="1" height="1"/><rect x="1" y="7" width="1" height="1"/><rect x="3" y="7" width="1" height="1"/><rect x="5" y="7" width="1" height="1"/><rect x="7" y="7" width="1" height="1"/></g></svg>
<!-- dialog -->
<div class="a" style="left:316px;top:331px;width:214px;height:180px;background:#fff;border:1px solid #9a9a9a;box-shadow:0.5px 0.5px 0 #c0c0c0"></div>
<div class="t s" style="left:355.5px;top:331px;font-size:11.6px;font-weight:bold;color:#111">Import Instrument Config.</div>
<div class="a" style="left:317px;top:343px;width:212px;height:1px;background:#8a8a8a"></div>
<div class="a" style="left:317px;top:345px;width:212px;height:2px;background:#a8a8a8"></div>
<div class="t s" style="left:321px;top:363px;font-size:7.8px;font-weight:bold;color:#484848">INSTRUMENT CONFIG. CATALOG:</div>
<div class="a" style="left:323px;top:376.5px;width:98.5px;height:18px;background:linear-gradient(#f8f8f8,#dedede);border:1px solid #8a8a8a;border-radius:3px;box-shadow:inset 0 0 0 1px #f0f0f0"></div>
<div class="a" style="left:408.5px;top:378px;width:1px;height:15px;background:#c8c8c8"></div>
<div class="t" style="left:328.6px;top:380px;font-size:10px;color:#111">Personal Catalog</div>
<div class="a" style="left:412.5px;top:381px;border-left:3px solid transparent;border-right:3px solid transparent;border-bottom:3.5px solid #111"></div>
<div class="a" style="left:412.5px;top:387px;border-left:3px solid transparent;border-right:3px solid transparent;border-top:3.5px solid #111"></div>
<div class="t s" style="left:321px;top:407px;font-size:7.8px;font-weight:bold;color:#484848">INSTRUMENT CONFIG. GROUP:</div>
<div class="a" style="left:323px;top:420.5px;width:85.5px;height:18.5px;background:linear-gradient(#f8f8f8,#dedede);border:1px solid #8a8a8a;border-radius:3px;box-shadow:inset 0 0 0 1px #f0f0f0"></div>
<div class="a" style="left:396px;top:422px;width:1px;height:15px;background:#c8c8c8"></div>
<div class="t" style="left:328.6px;top:424px;font-size:10.2px;color:#111">All Resources</div>
<div class="a" style="left:399.5px;top:425px;border-left:3px solid transparent;border-right:3px solid transparent;border-bottom:3.5px solid #111"></div>
<div class="a" style="left:399.5px;top:431px;border-left:3px solid transparent;border-right:3px solid transparent;border-top:3.5px solid #111"></div>
<div class="t s" style="left:321px;top:451px;font-size:7.9px;font-weight:bold;color:#484848">INSTRUMENT CONFIGS.:</div>
<div class="a" style="left:330.5px;top:468px;width:9px;height:9px;border-radius:50%;background:radial-gradient(circle,#4a8ee0 0,#4a8ee0 35%,#fff 45%);border:1px solid #8a8a8a"></div>
<div class="t s" style="left:340.8px;top:468.5px;font-size:10px;color:#111">my K polzn line</div>
<div class="a" style="left:322px;top:487.5px;width:21px;height:17.5px;background:#fff;border:1px solid #bcbcbc"></div>
<div class="t s" style="left:326.5px;top:490px;font-size:11px;color:#111">Ok</div>
<div class="a" style="left:484px;top:487.5px;width:39px;height:17.5px;background:#fff;border:1px solid #bcbcbc"></div>
<div class="t s" style="left:487.5px;top:490px;font-size:11px;color:#111">Cancel</div>
</body></html>
